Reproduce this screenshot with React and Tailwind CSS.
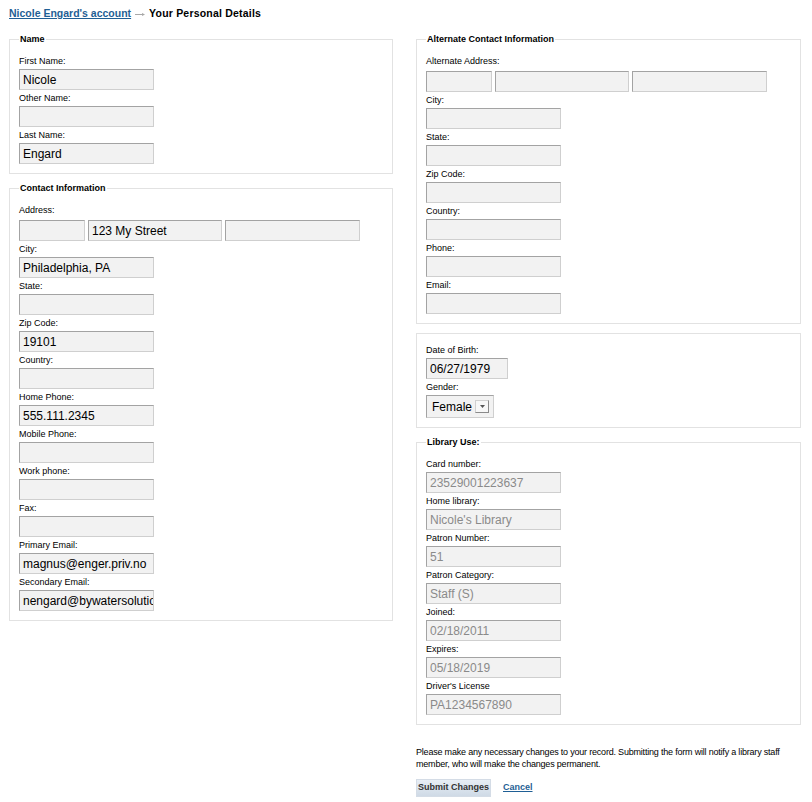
import React from "react";

const font = { fontFamily: '"Liberation Sans", Arial, sans-serif' };

function Field({ label, value = "", width = "w-[135px]", muted = false }) {
  return (
    <div className="mb-[3px]">
      <div className="mb-[2px] text-[9px] leading-[11px] text-black">{label}</div>
      <input
        type="text"
        readOnly
        defaultValue={value}
        className={`block h-[21px] ${width} border border-[#a3a3a3] border-r-[#cfcfcf] border-b-[#cfcfcf] bg-[#f2f2f2] pl-[3px] text-[12px] outline-none ${
          muted ? "text-[#8a8a8a]" : "text-black"
        }`}
      />
    </div>
  );
}

function AddressRow({ label, values = ["", "", ""] }) {
  const widths = ["w-[66px]", "w-[134px]", "w-[135px]"];
  return (
    <div className="mb-[3px]">
      <div className="mb-[4px] text-[9px] leading-[11px] text-black">{label}</div>
      <div className="flex gap-[3px]">
        {values.map((v, i) => (
          <input
            key={i}
            type="text"
            readOnly
            defaultValue={v}
            className={`block h-[21px] ${widths[i]} border border-[#a3a3a3] border-r-[#cfcfcf] border-b-[#cfcfcf] bg-[#f2f2f2] pl-[3px] text-[12px] text-black outline-none`}
          />
        ))}
      </div>
    </div>
  );
}

function Box({ legend, children }) {
  return (
    <fieldset className="border border-[#e2e2e2] px-[9px] pt-[11px] pb-[6px]">
      {legend && (
        <legend className="ml-0 px-[1px] text-[9px] leading-[11px] font-bold text-black">{legend}</legend>
      )}
      {children}
    </fieldset>
  );
}

export default function App() {
  return (
    <div className="min-h-screen bg-white pl-[9px] pt-[6px] text-black" style={font}>
      {/* breadcrumb */}
      <div className="flex h-[16px] items-center text-[10.5px] font-bold">
        <a href="#" className="text-[#1f5f95] underline">Nicole Engard's account</a>
        <svg className="mx-[4px]" width="10" height="5" viewBox="0 0 10 5">
          <path d="M0 2.5h7.5" stroke="#a8a8a8" strokeWidth="1" />
          <path d="M7 1L10 2.5L7 4z" fill="#a8a8a8" />
        </svg>
        <span className="tracking-[0.2px]">Your Personal Details</span>
      </div>

      <div className="mt-[12px] flex items-start gap-[23px]">
        {/* left column */}
        <div className="flex w-[384px] flex-col gap-[9px]">
          <Box legend="Name">
            <Field label="First Name:" value="Nicole" />
            <Field label="Other Name:" />
            <Field label="Last Name:" value="Engard" />
          </Box>
          <Box legend="Contact Information">
            <AddressRow label="Address:" values={["", "123 My Street", ""]} />
            <Field label="City:" value="Philadelphia, PA" />
            <Field label="State:" />
            <Field label="Zip Code:" value="19101" />
            <Field label="Country:" />
            <Field label="Home Phone:" value="555.111.2345" />
            <Field label="Mobile Phone:" />
            <Field label="Work phone:" />
            <Field label="Fax:" />
            <Field label="Primary Email:" value="magnus@enger.priv.no" />
            <Field label="Secondary Email:" value="nengard@bywatersolutions.com" />
          </Box>
        </div>

        {/* right column */}
        <div className="flex w-[385px] flex-col gap-[9px]">
          <Box legend="Alternate Contact Information">
            <AddressRow label="Alternate Address:" />
            <Field label="City:" />
            <Field label="State:" />
            <Field label="Zip Code:" />
            <Field label="Country:" />
            <Field label="Phone:" />
            <Field label="Email:" />
          </Box>
          <Box>
            <Field label="Date of Birth:" value="06/27/1979" width="w-[82px]" />
            <div className="mb-[3px]">
              <div className="mb-[2px] text-[9px] leading-[11px]">Gender:</div>
              <div className="flex h-[23px] w-[68px] items-center border border-[#a3a3a3] border-r-[#cfcfcf] border-b-[#cfcfcf] bg-[#f2f2f2] pl-[5px] text-[12px]">
                <span>Female</span>
                <span className="ml-auto mr-[4px] flex h-[13px] w-[14px] items-center justify-center border border-[#d0d0d0] border-r-[#8a8a8a] border-b-[#8a8a8a] bg-[#f7f7f7]">
                  <svg width="5" height="3" viewBox="0 0 5 3">
                    <path d="M0 0h5L2.5 3z" fill="#555" />
                  </svg>
                </span>
              </div>
            </div>
          </Box>
          <Box legend="Library Use:">
            <Field label="Card number:" value="23529001223637" muted />
            <Field label="Home library:" value="Nicole's Library" muted />
            <Field label="Patron Number:" value="51" muted />
            <Field label="Patron Category:" value="Staff (S)" muted />
            <Field label="Joined:" value="02/18/2011" muted />
            <Field label="Expires:" value="05/18/2019" muted />
            <Field label="Driver's License" value="PA1234567890" muted />
          </Box>

          <p className="mt-[12px] text-[9px] leading-[12px] tracking-[-0.2px]">
            Please make any necessary changes to your record. Submitting the form will notify a library staff
            member, who will make the changes permanent.
          </p>
          <div className="flex items-center gap-[12px]">
            <button className="h-[18px] w-[75px] border border-[#d4dce6] bg-gradient-to-b from-[#e8eef5] to-[#cfdae6] text-[9px] font-bold text-[#333]">
              Submit Changes
            </button>
            <a href="#" className="text-[9px] font-bold text-[#1f5f95] underline">Cancel</a>
          </div>
        </div>
      </div>
    </div>
  );
}
